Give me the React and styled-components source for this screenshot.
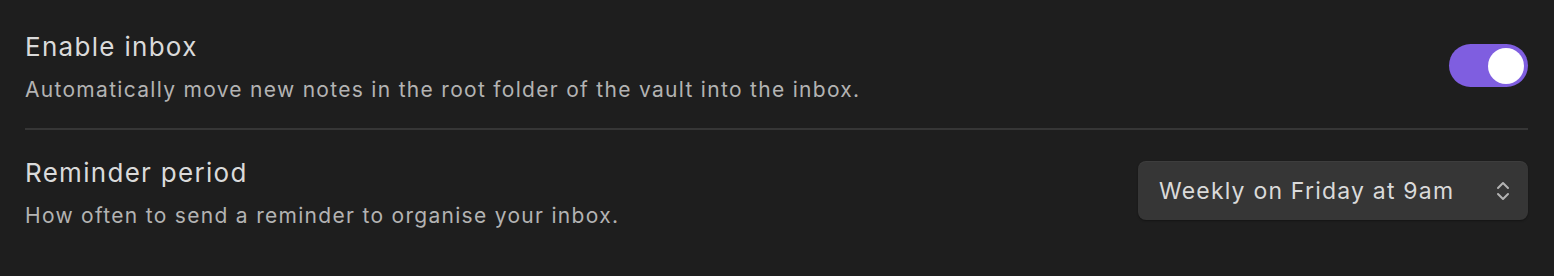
import styled, { createGlobalStyle } from "styled-components";

const GlobalStyle = createGlobalStyle`
    html, body {
        margin: 0;
        padding: 0;
        background: #1e1e1e;
    }
    body {
        font-family: Inter, "Noto Sans", sans-serif;
        -webkit-font-smoothing: antialiased;
    }
`;

const SettingsPane = styled.div`
    width: 1554px;
    height: 276px;
    box-sizing: border-box;
    padding: 0 26px 0 25px;
    background: #1e1e1e;
`;

const SettingItem = styled.div`
    display: flex;
    align-items: center;
    justify-content: space-between;
    gap: 24px;
    padding: ${(p) => p.$padding};
    border-top: ${(p) => (p.$divided ? "2px solid #363636" : "none")};
`;

const SettingInfo = styled.div`
    display: flex;
    flex-direction: column;
    gap: 11px;
`;

const SettingName = styled.div`
    font-size: 26px;
    line-height: 34px;
    letter-spacing: 1.3px;
    color: #dadada;
`;

const SettingDescription = styled.div`
    font-size: 21px;
    line-height: 30px;
    letter-spacing: 1.3px;
    color: #b3b3b3;
`;

const Toggle = styled.div`
    position: relative;
    width: 79px;
    height: 43px;
    margin-top: -4px;
    border-radius: 22px;
    background: #7f5ee0;
    flex-shrink: 0;

    &::after {
        content: "";
        position: absolute;
        top: 4px;
        right: 4px;
        width: 36px;
        height: 36px;
        border-radius: 50%;
        background: #ffffff;
    }
`;

const Dropdown = styled.div`
    display: flex;
    align-items: center;
    justify-content: space-between;
    box-sizing: border-box;
    width: 390px;
    height: 59px;
    margin-top: -6px;
    padding: 0 18px 0 21px;
    border-radius: 8px;
    background: #363636;
    box-shadow: 0 1px 2px rgba(0, 0, 0, 0.35), inset 0 1px 0 rgba(255, 255, 255, 0.04);
    color: #dadada;
    font-size: 23px;
    letter-spacing: 1.2px;
    flex-shrink: 0;
`;

const ChevronUpDown = () => (
    <svg width="14" height="20" viewBox="0 0 14 20" fill="none">
        <path
            d="M2 7 L7 2 L12 7 M2 13 L7 18 L12 13"
            stroke="#b3b3b3"
            strokeWidth="2"
            strokeLinecap="round"
            strokeLinejoin="round"
        />
    </svg>
);

export default function App() {
    return (
        <>
            <GlobalStyle />
            <SettingsPane>
                <SettingItem $padding="30px 0 23px">
                    <SettingInfo>
                        <SettingName>Enable inbox</SettingName>
                        <SettingDescription>
                            Automatically move new notes in the root folder of
                            the vault into the inbox.
                        </SettingDescription>
                    </SettingInfo>
                    <Toggle />
                </SettingItem>
                <SettingItem $divided $padding="26px 0">
                    <SettingInfo>
                        <SettingName>Reminder period</SettingName>
                        <SettingDescription>
                            How often to send a reminder to organise your inbox.
                        </SettingDescription>
                    </SettingInfo>
                    <Dropdown>
                        <span>Weekly on Friday at 9am</span>
                        <ChevronUpDown />
                    </Dropdown>
                </SettingItem>
            </SettingsPane>
        </>
    );
}
